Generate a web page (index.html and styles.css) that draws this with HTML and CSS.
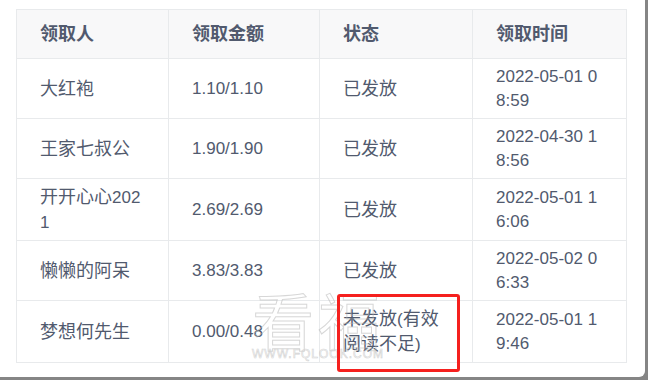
FILE: index.html
```html
<!DOCTYPE html>
<html lang="zh-CN">
<head>
<meta charset="utf-8">
<title>领取记录</title>
<link rel="stylesheet" href="styles.css">
</head>
<body>
<div class="panel">
  <table class="records">
    <colgroup><col class="c1"><col class="c2"><col class="c3"><col class="c4"></colgroup>
    <thead>
      <tr><th>领取人</th><th>领取金额</th><th>状态</th><th class="time">领取时间</th></tr>
    </thead>
    <tbody>
      <tr><td>大红袍</td><td class="lat">1.10/1.10</td><td>已发放</td><td class="lat time">2022-05-01 08:59</td></tr>
      <tr><td>王家七叔公</td><td class="lat">1.90/1.90</td><td>已发放</td><td class="lat time">2022-04-30 18:56</td></tr>
      <tr><td>开开心心<span class="lat">2021</span></td><td class="lat">2.69/2.69</td><td>已发放</td><td class="lat time">2022-05-01 16:06</td></tr>
      <tr><td>懒懒的阿呆</td><td class="lat">3.83/3.83</td><td>已发放</td><td class="lat time">2022-05-02 06:33</td></tr>
      <tr><td>梦想何先生</td><td class="lat">0.00/0.48</td><td>未发放<span class="lat">(</span>有效阅读不足<span class="lat">)</span></td><td class="lat time">2022-05-01 19:46</td></tr>
    </tbody>
  </table>
  <div class="watermark"><span class="wm-big">看福</span><span class="wm-small">WWW.FQLOOK.COM</span></div>
  <div class="highlight"></div>
</div>
</body>
</html>
```

FILE: styles.css
```css
html, body {
  margin: 0;
  padding: 0;
}
body {
  width: 648px;
  height: 380px;
  background: #858585;
  overflow: hidden;
  font-family: "Liberation Sans", "Noto Sans CJK SC", sans-serif;
  color: #515a6e;
}
.panel {
  position: relative;
  width: 645px;
  height: 377px;
  background: #fff;
  border-bottom-right-radius: 6px;
  padding: 9px 0 0 16px;
  box-sizing: border-box;
}
.records {
  width: 610px;
  border-collapse: collapse;
  table-layout: fixed;
  border: 1px solid #dcdee2;
  font-size: 18px;
}
.c1 { width: 152px; }
.c2 { width: 151px; }
.c3 { width: 153px; }
.c4 { width: 154px; }
.records th, .records td {
  text-align: left;
  border: 1px solid #e8eaec;
  word-break: break-all;
  vertical-align: middle;
}
.records th {
  background: #f8f8f9;
  font-weight: bold;
  height: 48px;
  padding: 0 22px 0 23px;
  line-height: 24px;
  color: #515a6e;
}
.records td {
  height: 48px;
  padding: 6px 22px 5px 23px;
  line-height: 24px;
  box-sizing: border-box;
  height: 59px;
}
.records .time {
  padding-right: 24px;
}
.lat {
  font-size: 17px;
}
.watermark {
  position: absolute;
  left: 252px;
  top: 290px;
  display: flex;
  flex-direction: column;
  align-items: center;
  pointer-events: none;
  opacity: 0.55;
}
.wm-big {
  font-family: "Noto Sans CJK SC", sans-serif;
  font-size: 62px;
  line-height: 58px;
  color: transparent;
  -webkit-text-stroke: 1px #b8b8b8;
  letter-spacing: 4px;
}
.wm-small {
  font-family: "Liberation Sans", sans-serif;
  font-size: 12px;
  line-height: 12px;
  color: transparent;
  -webkit-text-stroke: 0.6px #b0b0b0;
  letter-spacing: 1px;
}
.highlight {
  position: absolute;
  left: 337px;
  top: 294px;
  width: 117px;
  height: 72px;
  border: 3px solid #f5201e;
  border-radius: 3px;
}
```
